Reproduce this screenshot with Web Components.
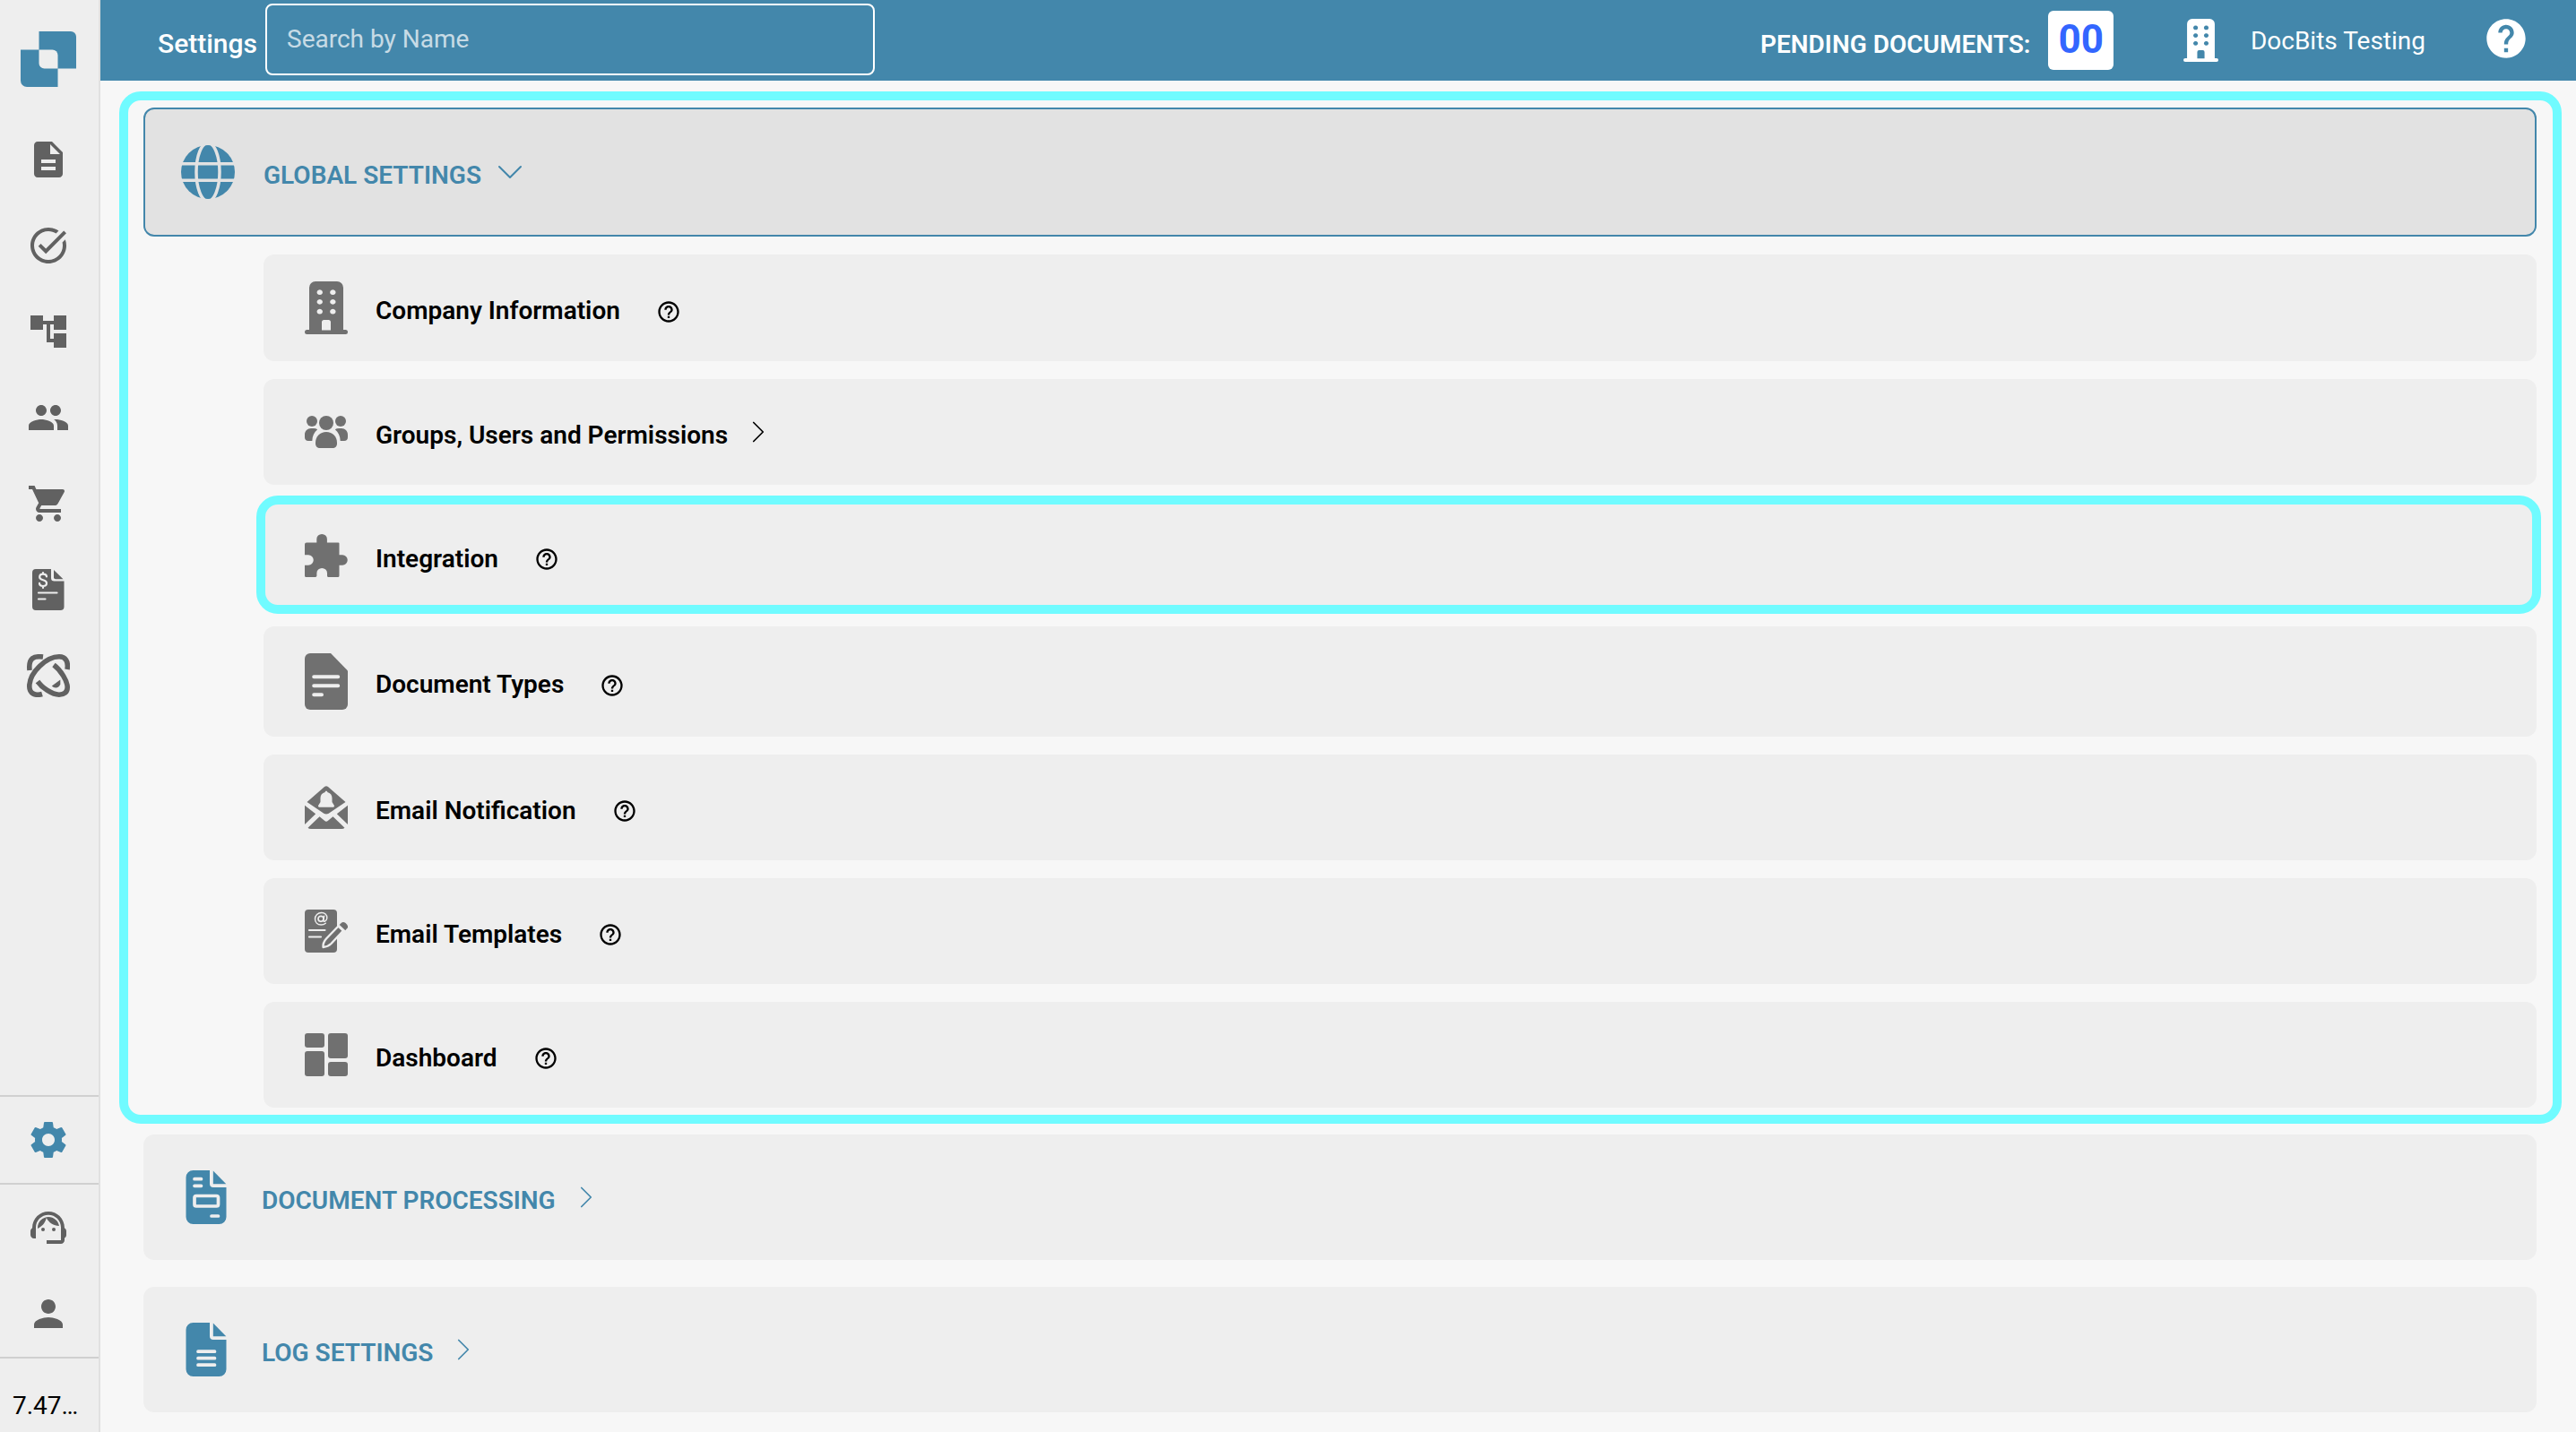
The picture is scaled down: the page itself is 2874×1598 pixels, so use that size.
<!DOCTYPE html>
<html lang="en">
<head>
<meta charset="utf-8">
<meta name="viewport" content="width=device-width, initial-scale=1">
<title>Settings</title>
<style>
    body {
        margin: 0;
        background: #f7f7f7;
        color: #000;
        font-family: Roboto, "Liberation Sans", sans-serif;
        font-size: 28px;
        --brand: #4387ab;
        --panel: #eeeeee;
        --mark: #70fbff;
    }
</style>
</head>
<body>
<app-shell>
    <side-bar slot="side">
        <nav-item icon="description" label="Documents"></nav-item>
        <nav-item icon="task" label="Tasks"></nav-item>
        <nav-item icon="tree" label="Workflow"></nav-item>
        <nav-item icon="people" label="Users"></nav-item>
        <nav-item icon="cart" label="Purchase orders"></nav-item>
        <nav-item icon="invoice" label="Invoices"></nav-item>
        <nav-item icon="atom" label="AI"></nav-item>
        <nav-item slot="bottom" icon="gear" label="Settings" active divided></nav-item>
        <nav-item slot="bottom" icon="support" label="Support" divided></nav-item>
        <nav-item slot="bottom" icon="person" label="Profile"></nav-item>
        <span slot="version">7.47…</span>
    </side-bar>
    <top-bar slot="top" heading="Settings" pending="00" company="DocBits Testing"></top-bar>
    <settings-group highlighted>
        <settings-card slot="head" icon="globe" open>GLOBAL SETTINGS</settings-card>
        <settings-row icon="building" help>Company Information</settings-row>
        <settings-row icon="groups" more>Groups, Users and Permissions</settings-row>
        <settings-row icon="puzzle" help highlighted>Integration</settings-row>
        <settings-row icon="doctype" help>Document Types</settings-row>
        <settings-row icon="mailbell" help>Email Notification</settings-row>
        <settings-row icon="mailedit" help>Email Templates</settings-row>
        <settings-row icon="dashboard" help>Dashboard</settings-row>
    </settings-group>
    <settings-group>
        <settings-card slot="head" icon="docform">DOCUMENT PROCESSING</settings-card>
    </settings-group>
    <settings-group>
        <settings-card slot="head" icon="doclog">LOG SETTINGS</settings-card>
    </settings-group>
</app-shell>

<script>
// name: [width, height, viewBox, shapes]
const FILE_BODY = '<path d="M8 0H26.500V15a4 4 0 0 0 4 4H45V52a8 8 0 0 1-8 8H8a8 8 0 0 1-8-8V8a8 8 0 0 1 8-8z"/><path d="M30.300.500 44.800 15.300H30.300z"/>';
const ICONS = {
    logo: [62, 62, '0 0 62 62', '<path d="M20.500 0H56a6 6 0 0 1 6 6v35.500H20.500z"/><path d="M0 20.500h41.500V62H7a7 7 0 0 1-7-7z"/><path fill="#eee" d="M20.500 20.500h15a6 6 0 0 1 6 6v15h-15a6 6 0 0 1-6-6z"/>'],
    description: [48, 48, '0 0 24 24', '<path d="M14 2H6c-1.100 0-1.990.9-1.990 2L4 20c0 1.100.89 2 1.990 2H18c1.100 0 2-.9 2-2V8l-6-6zm2 16H8v-2h8v2zm0-4H8v-2h8v2zm-3-5V3.500L18.500 9H13z"/>'],
    task: [48, 48, '0 0 24 24', '<path d="M22 5.180 10.590 16.600l-4.240-4.240 1.410-1.410 2.830 2.830 10-10L22 5.180zM19.790 10.220c.13.57.21 1.170.21 1.780 0 4.420-3.580 8-8 8s-8-3.580-8-8 3.580-8 8-8c1.580 0 3.040.46 4.280 1.250l1.440-1.440C16.100 2.670 14.130 2 12 2 6.480 2 2 6.480 2 12s4.480 10 10 10 10-4.480 10-10c0-1.190-.22-2.330-.6-3.390l-1.610 1.610z"/>'],
    tree: [48, 48, '0 0 24 24', '<path d="M22 11V3h-7v3H9V3H2v8h7V8h2v10h4v3h7v-8h-7v3h-2V8h2v3z"/>'],
    people: [48, 48, '0 0 24 24', '<path d="M16 11c1.660 0 2.990-1.340 2.990-3S17.660 5 16 5c-1.660 0-3 1.340-3 3s1.340 3 3 3zm-8 0c1.660 0 2.990-1.340 2.990-3S9.660 5 8 5C6.340 5 5 6.340 5 8s1.340 3 3 3zm0 2c-2.330 0-7 1.170-7 3.500V19h14v-2.500c0-2.330-4.670-3.500-7-3.500zm8 0c-.29 0-.62.02-.97.05 1.160.84 1.970 1.970 1.970 3.450V19h6v-2.500c0-2.330-4.670-3.500-7-3.500z"/>'],
    cart: [48, 48, '0 0 24 24', '<path d="M7 18c-1.100 0-1.990.9-1.990 2S5.900 22 7 22s2-.9 2-2-.9-2-2-2zM1 2v2h2l3.600 7.590-1.350 2.450c-.16.28-.25.61-.25.96 0 1.100.9 2 2 2h12v-2H7.420c-.14 0-.25-.11-.25-.25l.03-.12.9-1.630h7.450c.75 0 1.410-.41 1.750-1.030l3.580-6.490c.08-.14.12-.31.12-.48 0-.55-.45-1-1-1H5.210l-.94-2H1zm16 16c-1.100 0-1.990.9-1.990 2s.89 2 1.990 2 2-.9 2-2-.9-2-2-2z"/>'],
    invoice: [36, 46, '0 0 36 46', '<path d="M4 0H21V10a3.500 3.500 0 0 0 3.500 3.500H35.500V42a4 4 0 0 1-4 4H4a4 4 0 0 1-4-4V4a4 4 0 0 1 4-4z"/><path d="M24 1 34.500 11.200H26a2 2 0 0 1-2-2z"/><g stroke="#eee" fill="none" stroke-width="2.200" stroke-linecap="round"><path d="M16 8.500C16 6.500 14.200 5.700 12 5.700S8.200 6.900 8.200 9c0 4.500 7.800 2 7.800 6.700 0 2.200-1.800 3.300-4 3.300s-4-1.100-4-3.200M12 4v1.500M12 19v2M7 26.500H27.500M7 33.500H14.500"/></g>'],
    atom: [48, 48, '0 0 48 48', '<g fill="none" stroke="currentColor" stroke-width="5.600"><path d="M17 44.500C9 47 2.800 43.500 2.800 36 2.800 20 22 2.800 36 2.800 43 2.800 46.500 8 45 17"/><path d="M30 12C38 18 45.200 30 45.200 37 45.200 42.500 41.500 45.200 36 45.200 28 45.200 17 37.500 12 30.500"/><path d="M18 3C8 1.800 1.500 4 3 18"/></g><path d="M37.300 28.500v5c-1.500 4.800-6.800 5-9.500 2z"/>'],
    gear: [48, 48, '0 0 24 24', '<path d="M19.430 12.980c.04-.32.07-.64.07-.98s-.03-.66-.07-.98l2.110-1.650c.19-.15.24-.42.12-.64l-2-3.460c-.12-.22-.39-.3-.61-.22l-2.490 1c-.52-.4-1.080-.73-1.690-.98l-.38-2.650C14.460 2.180 14.250 2 14 2h-4c-.25 0-.46.18-.49.42l-.38 2.650c-.61.25-1.170.59-1.690.98l-2.490-1c-.23-.09-.49 0-.61.22l-2 3.460c-.13.22-.07.49.12.64l2.110 1.650c-.04.32-.07.65-.07.98s.03.66.07.98l-2.110 1.650c-.19.15-.24.42-.12.64l2 3.460c.12.22.39.3.61.22l2.490-1c.52.4 1.080.73 1.690.98l.38 2.650c.03.24.24.42.49.42h4c.25 0 .46-.18.49-.42l.38-2.650c.61-.25 1.170-.59 1.690-.98l2.490 1c.23.09.49 0 .61-.22l2-3.460c.12-.22.07-.49-.12-.64l-2.110-1.650zM12 15.500c-1.930 0-3.500-1.570-3.500-3.500s1.570-3.500 3.500-3.500 3.500 1.570 3.500 3.500-1.570 3.500-3.500 3.500z"/>'],
    support: [48, 48, '0 0 24 24', '<path d="M21 12.220C21 6.730 16.740 3 12 3c-4.690 0-9 3.650-9 9.280-.6.34-1 .98-1 1.720v2c0 1.100.9 2 2 2h1v-6.100c0-3.870 3.130-7 7-7s7 3.130 7 7V19h-8v2h8c1.100 0 2-.9 2-2v-1.220c.59-.31 1-.92 1-1.640v-2.300c0-.7-.41-1.310-1-1.620z"/><circle cx="9" cy="13" r="1"/><circle cx="15" cy="13" r="1"/><path d="M18 11.030C17.520 8.180 15.040 6 12.050 6c-3.030 0-6.290 2.510-6.030 6.450 2.470-1.010 4.330-3.210 4.860-5.890 1.310 2.630 4 4.440 7.120 4.470z"/>'],
    person: [48, 48, '0 0 24 24', '<path d="M12 12c2.210 0 4-1.790 4-4s-1.790-4-4-4-4 1.790-4 4 1.790 4 4 4zm0 2c-2.670 0-8 1.340-8 4v2h16v-2c0-2.660-5.330-4-8-4z"/>'],
    help: [52, 52, '0 0 24 24', '<path d="M12 2C6.480 2 2 6.480 2 12s4.480 10 10 10 10-4.480 10-10S17.520 2 12 2zm1 17h-2v-2h2v2zm2.070-7.750l-.9.92C13.450 12.900 13 13.500 13 15h-2v-.5c0-1.100.45-2.100 1.170-2.830l1.240-1.260c.37-.36.59-.86.59-1.410 0-1.100-.9-2-2-2s-2 .9-2 2H8c0-2.210 1.790-4 4-4s4 1.790 4 4c0 .88-.36 1.680-.93 2.250z"/>'],
    helpline: [28, 28, '0 0 24 24', '<path d="M11 18h2v-2h-2v2zm1-16C6.480 2 2 6.480 2 12s4.480 10 10 10 10-4.480 10-10S17.520 2 12 2zm0 18c-4.410 0-8-3.590-8-8s3.590-8 8-8 8 3.590 8 8-3.590 8-8 8zm0-14c-2.210 0-4 1.790-4 4h2c0-1.100.9-2 2-2s2 .9 2 2c0 2-3 1.750-3 5h2c0-2.250 3-2.500 3-5 0-2.210-1.790-4-4-4z"/>'],
    right: [28, 28, '0 0 16 16', '<path d="M5 2l6 6-6 6" fill="none" stroke="currentColor" stroke-linecap="round" stroke-linejoin="round"/>'],
    down: [32, 32, '0 0 16 16', '<path d="M2 5l6 6 6-6" fill="none" stroke="currentColor" stroke-linecap="round" stroke-linejoin="round"/>'],
    globe: [60, 60, '0 0 60 60', '<circle cx="30" cy="30" r="30"/><g fill="none" stroke="#e2e2e2" stroke-width="3.500"><ellipse cx="30" cy="30" rx="13" ry="32.500"/><path d="M0 20.700h60M0 39.300h60"/></g>'],
    docform: [60, 60, '-7.500 0 60 60', FILE_BODY + '<g fill="none" stroke="#eee" stroke-width="3.700" stroke-linecap="round"><path d="M9.500 9.700h7.500M9.500 17.300h7.500M28.500 51h7.500"/><rect x="9.500" y="28.500" width="26.500" height="11.500" rx="2"/></g>'],
    doclog: [60, 60, '-7.500 0 60 60', FILE_BODY + '<path d="M13.500 32.200h18.500M13.500 39.700h18.500M13.500 47.200h18.500" stroke="#eee" stroke-width="3.700" stroke-linecap="round"/>'],
    building: [48, 59, '0 0 48 59', '<path fill-rule="evenodd" d="M12 0h24a7 7 0 0 1 7 7v47h2.500a2.500 2.500 0 0 1 0 5h-43a2.500 2.500 0 0 1 0-5H5V7a7 7 0 0 1 7-7zM21.500 43a2.500 2.500 0 0 0-2.500 2.500V54.500H29V45.500a2.500 2.500 0 0 0-2.500-2.500zM16.700 9.300a3.200 2.900 0 1 0 .1 0zM31.300 9.300a3.200 2.900 0 1 0 .1 0zM16.700 20a3.200 2.900 0 1 0 .1 0zM31.300 20a3.200 2.900 0 1 0 .1 0zM16.700 30.800a3.200 2.900 0 1 0 .1 0zM31.300 30.800a3.200 2.900 0 1 0 .1 0z"/>'],
    groups: [48, 36, '0 0 48 36', '<circle cx="8" cy="6" r="6"/><circle cx="40" cy="6" r="6"/><circle cx="24" cy="8" r="8"/><path d="M24 18c7 0 12 5 12 12v1c0 3-2 5-5 5H17c-3 0-5-2-5-5v-1c0-7 5-12 12-12z"/><path d="M7 14h3c1.600 0 3 .4 4.200 1.200C10.500 18 8.500 22.500 8.300 28H4c-2.500 0-4-1.500-4-4v-3c0-4 3-7 7-7zM41 14h-3c-1.600 0-3 .4-4.200 1.200C37.500 18 39.500 22.500 39.700 28H44c2.500 0 4-1.500 4-4v-3c0-4-3-7-7-7z"/>'],
    puzzle: [48, 48, '0 0 48 48', '<path d="M2 9.500H13.300V5.500a5.800 5.500 0 0 1 11.600 0V9.500H37.500a1 1 0 0 1 1 1V23.200H42a5.700 5.700 0 0 1 0 11.500H38.500V46.500a1.500 1.500 0 0 1-1.500 1.500H26.500a1.500 1.500 0 0 1-1.500-1.500V43.500a5.800 5.500 0 0 0-11.600 0V46.500A1.500 1.500 0 0 1 12 48H1.500A1.500 1.500 0 0 1 0 46.500V34.700H4a5.700 5.700 0 0 0 0-11.500H0V11.500a2 2 0 0 1 2-2z"/>'],
    doctype: [48, 63, '0 0 48 63', '<path d="M6 0H29L48 19.500V57a6 6 0 0 1-6 6H6a6 6 0 0 1-6-6V6a6 6 0 0 1 6-6z"/><path d="M10.200 26.300h27M10.200 36.300h27M10.200 46.200h8.800" stroke="#eee" stroke-width="4" stroke-linecap="round"/>'],
    mailbell: [48, 48, '0 0 48 48', '<path d="M2.500 18 22 1Q24-.6 26 1L45.500 18 28.500 29.500Q24 33.500 19.500 29.500zM0 21.800 12.200 31.300 0 43zM48 21.800 35.800 31.300 48 43zM3.500 46.800 16.500 34.200 22 38.800Q24 40.500 26 38.800L31.500 34.200 44.500 46.800Q43.500 48 41 48H7Q4.500 48 3.500 46.800z"/><path fill="#eee" d="M24 5.700c.8 0 1.300.5 1.300 1.300 3.200.8 5.200 3.300 5.200 6.500v4.500l2.300 3.800c.5 1 0 1.900-1 1.900H16.200c-1 0-1.500-.9-1-1.900l2.300-3.800v-4.500c0-3.200 2-5.700 5.200-6.500 0-.8.500-1.300 1.300-1.300z"/>'],
    mailedit: [48, 48, '0 0 48 48', '<rect width="36" height="48" rx="4"/><g fill="none" stroke="#eee" stroke-linecap="round"><path stroke-width="2.200" d="M5 23H22.500M5 30.500H18"/><circle cx="18" cy="10.300" r="3" stroke-width="1.700"/><path stroke-width="1.500" d="M21.600 7.300 20.700 12c-.2 2 3.800 1.500 4.100-2.500C25.100 5.500 22 3.400 18.800 3.400 14.600 3.400 11.500 6.500 11.500 10.500c0 4 2.800 6.500 6.800 6.500 2.200 0 3.700-.6 5-1.700"/></g><path d="M37.500 18.500 43 23.500 29.500 38Q26 41.500 20.500 42 20 37 24 32.500z" stroke="#eee" stroke-width="2.400" stroke-linejoin="round"/><path d="M38.700 17 41 14.800q2-1.800 4.500.3 3.500 3 2.300 5.200L45.300 23.300z"/>'],
    dashboard: [48, 48, '0 0 48 48', '<rect width="22" height="16" rx="3"/><rect y="20" width="22" height="28" rx="3"/><rect x="26" width="22" height="28" rx="3"/><rect x="26" y="32" width="22" height="16" rx="3"/>']
};

class AppIcon extends HTMLElement {
    constructor() {
        super();
        this.attachShadow({ mode: 'open' });
    }

    connectedCallback() {
        const [w, h, box, shapes] = ICONS[this.getAttribute('name')];
        // "height" rescales an icon and keeps its proportions
        const height = Number(this.getAttribute('height')) || h;
        const width = Math.round(w * height / h);
        this.shadowRoot.innerHTML = `
            <style>
                :host { display: flex; flex: none; }
                svg { display: block; fill: currentColor; }
            </style>
            <svg width="${width}" height="${height}" viewBox="${box}" aria-hidden="true">${shapes}</svg>
        `;
    }
}

class AppShell extends HTMLElement {
    constructor() {
        super();
        this.attachShadow({ mode: 'open' }).innerHTML = `
            <style>
                :host {
                    display: grid;
                    grid-template-columns: 112px minmax(0, 1fr);
                    min-height: 100vh;
                }
                .page { display: flex; flex-direction: column; min-width: 0; }
                main {
                    display: flex;
                    flex-direction: column;
                    gap: 30px;
                    padding: 12px 16px 20px 21px;
                }
            </style>
            <slot name="side"></slot>
            <div class="page">
                <slot name="top"></slot>
                <main><slot></slot></main>
            </div>
        `;
    }
}

class SideBar extends HTMLElement {
    constructor() {
        super();
        this.attachShadow({ mode: 'open' }).innerHTML = `
            <style>
                :host {
                    display: flex;
                    flex-direction: column;
                    box-sizing: border-box;
                    background: var(--panel);
                    border-right: 2px solid #e0e0e0;
                }
                .logo {
                    display: flex;
                    justify-content: center;
                    padding: 35px 2px 33px 0;
                    color: var(--brand);
                }
                nav, .bottom { display: flex; flex-direction: column; }
                .bottom { margin-top: auto; }
                .version {
                    padding: 36px 14px 13px;
                    line-height: 33px;
                    border-top: 2px solid #d0d0d0;
                    white-space: nowrap;
                }
            </style>
            <a class="logo" href="#" aria-label="Home"><app-icon name="logo"></app-icon></a>
            <nav><slot></slot></nav>
            <div class="bottom">
                <slot name="bottom"></slot>
                <div class="version"><slot name="version"></slot></div>
            </div>
        `;
    }
}

class NavItem extends HTMLElement {
    constructor() {
        super();
        this.attachShadow({ mode: 'open' });
    }

    connectedCallback() {
        this.shadowRoot.innerHTML = `
            <style>
                :host { display: block; color: #616161; }
                :host([active]) { color: var(--brand); }
                :host([divided]) { border-top: 2px solid #d0d0d0; }
                a {
                    display: flex;
                    align-items: center;
                    justify-content: center;
                    height: 96px;
                    padding-right: 2px;
                    color: inherit;
                }
            </style>
            <a href="#" aria-label="${this.getAttribute('label')}">
                <app-icon name="${this.getAttribute('icon')}"></app-icon>
            </a>
        `;
    }
}

class TopBar extends HTMLElement {
    constructor() {
        super();
        this.attachShadow({ mode: 'open' });
    }

    connectedCallback() {
        this.shadowRoot.innerHTML = `
            <style>
                :host {
                    display: flex;
                    align-items: center;
                    justify-content: space-between;
                    box-sizing: border-box;
                    height: 90px;
                    padding: 0 52px 0 64px;
                    background: var(--brand);
                    color: #fff;
                    line-height: 33px;
                }
                .left, .right { display: flex; align-items: center; }
                .left { gap: 9px; padding-bottom: 2px; }
                label, .pending { padding-top: 8px; }
                label { font-size: 30px; font-weight: 500; }
                .pending { font-weight: 600; }
                input {
                    box-sizing: border-box;
                    width: 680px;
                    height: 80px;
                    padding: 0 22px 2px;
                    border: 2px solid #fff;
                    border-radius: 8px;
                    background: transparent;
                    color: #fff;
                    font: inherit;
                }
                input::placeholder { color: #fff; opacity: .7; }
                output {
                    box-sizing: border-box;
                    height: 66px;
                    margin: 0 78px 0 20px;
                    padding: 6px 11px 8px;
                    border-radius: 6px;
                    background: #fff;
                    color: #3366ff;
                    font-size: 44px;
                    font-weight: 700;
                    line-height: 52px;
                }
                .company { margin: 0 64px 0 36px; }
                button {
                    display: flex;
                    padding: 0 0 4px;
                    border: 0;
                    background: none;
                    color: inherit;
                }
            </style>
            <div class="left">
                <label for="search">${this.getAttribute('heading')}</label>
                <input id="search" type="text" placeholder="Search by Name">
            </div>
            <div class="right">
                <span class="pending">PENDING DOCUMENTS:</span>
                <output>${this.getAttribute('pending')}</output>
                <app-icon name="building" height="48"></app-icon>
                <span class="company">${this.getAttribute('company')}</span>
                <button type="button" aria-label="Help"><app-icon name="help"></app-icon></button>
            </div>
        `;
    }
}

class SettingsGroup extends HTMLElement {
    constructor() {
        super();
        this.attachShadow({ mode: 'open' }).innerHTML = `
            <style>
                :host { display: block; padding: 0 28px 0 27px; }
                :host([highlighted]) {
                    padding: 8px 18px 8px 17px;
                    margin-bottom: -18px;
                    border: 10px solid var(--mark);
                    border-radius: 24px;
                }
                .rows {
                    display: flex;
                    flex-direction: column;
                    gap: 20px;
                    padding-left: 134px;
                }
                :host([highlighted]) .rows { padding-top: 20px; }
            </style>
            <slot name="head"></slot>
            <div class="rows"><slot></slot></div>
        `;
    }
}

class SettingsCard extends HTMLElement {
    constructor() {
        super();
        this.attachShadow({ mode: 'open' });
    }

    connectedCallback() {
        const open = this.hasAttribute('open');
        this.shadowRoot.innerHTML = `
            <style>
                :host { display: block; }
                button {
                    display: flex;
                    align-items: center;
                    width: 100%;
                    padding: 40px;
                    border: 0;
                    border-radius: 12px;
                    background: var(--panel);
                    color: var(--brand);
                    font: inherit;
                    font-weight: 600;
                    line-height: 33px;
                }
                :host([open]) button { border: 2px solid var(--brand); background: #e2e2e2; }
                .title { margin: 0 20px 0 32px; padding-top: 6px; }
                :host([open]) .title { margin-right: 16px; }
            </style>
            <button type="button" aria-expanded="${open}">
                <app-icon name="${this.getAttribute('icon')}"></app-icon>
                <span class="title"><slot></slot></span>
                <app-icon name="${open ? 'down' : 'right'}"></app-icon>
            </button>
        `;
    }
}

class SettingsRow extends HTMLElement {
    constructor() {
        super();
        this.attachShadow({ mode: 'open' });
    }

    connectedCallback() {
        const help = this.hasAttribute('help')
            ? '<button type="button" aria-label="Help"><app-icon name="helpline"></app-icon></button>'
            : '';
        const more = this.hasAttribute('more') ? '<app-icon name="right"></app-icon>' : '';
        this.shadowRoot.innerHTML = `
            <style>
                :host {
                    display: flex;
                    align-items: center;
                    position: relative;
                    min-height: 58px;
                    padding: 30px 46px;
                    border-radius: 12px;
                    background: var(--panel);
                }
                /* marker frame drawn over the row's edge */
                :host([highlighted])::after {
                    content: "";
                    position: absolute;
                    inset: -8px -5px -6px -8px;
                    border: 10px solid var(--mark);
                    border-radius: 24px;
                    pointer-events: none;
                }
                a {
                    display: flex;
                    align-items: center;
                    color: inherit;
                    text-decoration: none;
                    font-weight: 600;
                    line-height: 33px;
                }
                a > app-icon:first-child { color: #707070; }
                .title { margin: 0 20px 0 31px; padding-top: 6px; }
                button {
                    display: flex;
                    margin-left: 20px;
                    padding: 8px 0 0;
                    border: 0;
                    background: none;
                    color: inherit;
                }
            </style>
            <a href="#">
                <app-icon name="${this.getAttribute('icon')}"></app-icon>
                <span class="title"><slot></slot></span>
                ${more}
            </a>
            ${help}
        `;
    }
}

customElements.define('app-icon', AppIcon);
customElements.define('app-shell', AppShell);
customElements.define('side-bar', SideBar);
customElements.define('nav-item', NavItem);
customElements.define('top-bar', TopBar);
customElements.define('settings-group', SettingsGroup);
customElements.define('settings-card', SettingsCard);
customElements.define('settings-row', SettingsRow);
</script>
</body>
</html>
